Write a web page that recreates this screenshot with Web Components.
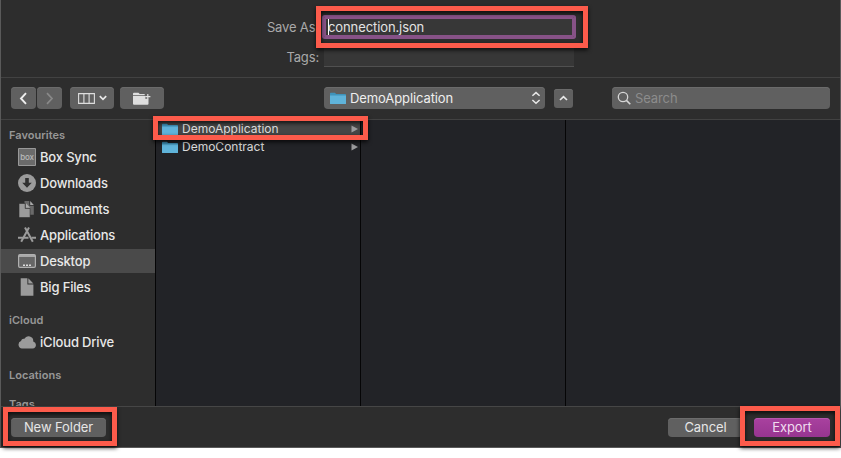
<!DOCTYPE html>
<html lang="en">
<head>
<meta charset="utf-8">
<title>Save dialog</title>
<style>
html,body{margin:0;background:#fff;overflow:hidden}
body{width:841px;height:458px;font-family:Inter,"Liberation Sans",sans-serif;font-size:13px;color:#e4e4e4}
</style>
</head>
<body>
<save-dialog></save-dialog>
<script>
const define = (name, html) => {
  const t = document.createElement('template');
  t.innerHTML = html;
  customElements.define(name, class extends HTMLElement {
    constructor() {
      super();
      this.attachShadow({mode: 'open'}).append(t.content.cloneNode(true));
    }
  });
};

/* Icons */
const ICONS = {
  back: [9, 13, '<path d="M7 1.2 2 6.5 7 11.8" fill="none" stroke="#eee" stroke-width="1.9"/>'],
  forward: [9, 13, '<path d="M2 1.2 7 6.5 2 11.8" fill="none" stroke="#898989" stroke-width="1.7"/>'],
  columns: [17, 11, '<path d="M.6.6h15.8v9.8H.6zM5.9.6v9.8M11.1.6v9.8" fill="none" stroke="#ddd" stroke-width="1.1"/>'],
  chevron: [8, 6, '<path d="M.8 1.2 4 4.4 7.200 1.200" fill="none" stroke="#e8e8e8" stroke-width="1.700"/>'],
  up: [9, 6, '<path d="M1 5 4.5 1.7 8 5" fill="none" stroke="#e8e8e8" stroke-width="1.7"/>'],
  updown: [10, 14, '<path d="M1.4 4.8 5 1.6 8.6 4.8M1.4 9 5 12.2 8.6 9" fill="none" stroke="#e8e8e8" stroke-width="1.5"/>'],
  newfolder: [18, 13, '<path d="M0 1.8Q0 .8 1 .8h4.500l1.200 1.200h5v1.300H0zM0 4h12.300v2.800h3.200v4.900q0 1-1 1H1q-1 0-1-1z" fill="#dedede"/><path d="M14.800 2v5.200M12.200 4.600h5.200" stroke="#dedede" stroke-width="1.200"/>'],
  search: [14, 14, '<circle cx="6" cy="6" r="4.700" fill="none" stroke="#d6d6d6" stroke-width="1.3"/><path d="m9.4 9.4 3.900 3.900" stroke="#d6d6d6" stroke-width="1.600"/>'],
  folder: [16, 13, '<path d="M0 1.500Q0 .8.8.8h4l1.400 1.200h9q.8 0 .8.8V4H0z" fill="#3f93bb"/><path d="M0 3.400h16v8q0 .6-.6.6H.6q-.6 0-.6-.6z" fill="#5fb3da"/>'],
  arrow: [7, 8, '<path d="M.5.5 7 4 .5 7.5z" fill="#9b9b9d"/>'],
  box: [18, 18, '<path d="M.5.5h17v17H.5z" fill="#6b6b6b" stroke="#999"/><text x="9" y="12" text-anchor="middle" font-size="8" fill="#b9b9b9" letter-spacing="-.2">box</text>'],
  downloads: [18, 18, '<circle cx="9" cy="9" r="9" fill="#9b9b9b"/><path d="M7.2 4h3.6v4.8h3L9 13.8 4.200 8.800h3z" fill="#303030"/>'],
  documents: [18, 18, '<path d="M6.500 1h4.800v4.800h4.500v9H6.500z" fill="#6a6a6a"/><path d="m12.200 1 3.600 4h-3.600z" fill="#aaa"/><path d="M1 3.500h6.200v5h4.900v9H1z" fill="#9b9b9b" stroke="#2e2e2e" stroke-width=".6"/><path d="m8 3.300 4.200 4.400H8z" fill="#aaa"/>'],
  applications: [18, 18, '<g fill="none" stroke="#9b9b9b" stroke-width="2"><path d="m7 1.500 7.800 14.200M11 1.500 3.200 15.700"/><path d="M0 11.700h10.500M13.500 11.700H18"/></g>'],
  desktop: [18, 14, '<rect x=".6" y=".6" width="16.800" height="12.800" rx="1.300" fill="#666" stroke="#b0b0b0" stroke-width="1.200"/><path d="M1 2h16" stroke="#b0b0b0" stroke-width="1.800"/><path d="M5 11.300h2m1 0h2m1 0h2" stroke="#ddd" stroke-width="1.400"/>'],
  file: [18, 18, '<path d="M2.700.3h6.700v6.200h6V17.700H2.700z" fill="#9b9b9b"/><path d="m10.300.3 5.100 5.300h-5.100z" fill="#9b9b9b"/>'],
  cloud: [18, 13, '<path d="M4 12.500a3.900 3.900 0 0 1-1-7.500 3 3 0 0 1 3.400-2.200A4.700 4.700 0 0 1 15.200 5.600a3.500 3.500 0 0 1-.5 6.900z" fill="#9b9b9b"/>']
};
customElements.define('ui-icon', class extends HTMLElement {
  connectedCallback() {
    if (this.shadowRoot) return;
    const [w, h, body] = ICONS[this.getAttribute('name')];
    this.attachShadow({mode: 'open'}).innerHTML =
      `<style>:host{display:block;flex:none;width:${w}px;height:${h}px}svg{display:block}</style><svg width="${w}" height="${h}" viewBox="0 0 ${w} ${h}">${body}</svg>`;
  }
});

/* Callout frame laid over the control it surrounds */
define('callout-frame', `<style>
:host{position:absolute;z-index:5;box-sizing:border-box;border:5px solid #fc5b4b;filter:drop-shadow(0 2px 2px #000c);pointer-events:none}
</style>`);

define('tool-button', `<style>
:host{display:flex;align-items:center;justify-content:center;box-sizing:border-box;width:44px;height:22px;border-radius:4px;background:#606060;box-shadow:inset 0 1px #6b6b6b;color:#eee}
</style><slot></slot>`);

define('push-button', `<style>
:host{display:flex;align-items:center;justify-content:center;height:19px;border-radius:4px;background:#606060;box-shadow:inset 0 1px #6c6c6c;color:#e6e6e6;white-space:nowrap;letter-spacing:-.08px}
:host([primary]){background:linear-gradient(#a9419f,#973590);box-shadow:inset 0 1px #b656ad;color:#f0dcef}
</style><slot></slot>`);

define('form-row', `<style>
:host{display:grid;grid-template-columns:318px 250px;column-gap:5px;height:20px;align-items:center}
.label{text-align:right;color:#a9a9a9;white-space:nowrap;letter-spacing:-.15px}
</style><span class="label"><slot name="label"></slot></span><slot></slot>`);

define('text-field', `<style>
:host{display:flex;align-items:center;box-sizing:border-box;height:20px;background:#373737;box-shadow:inset 0 -1px #505050;color:#e3e3e3}
:host([focused]){box-shadow:0 0 0 2px #875287,inset 0 0 0 2px #875287;border-radius:1px;padding-left:4px}
i{display:none;width:1px;height:16px;background:#fff;margin-right:-1px}
:host([focused]) i{display:block}
</style><i></i><slot></slot>`);

define('side-heading', `<style>
:host{display:flex;align-items:center;height:18px;padding-left:8px;font-size:11px;font-weight:600;color:#979797;white-space:nowrap;letter-spacing:.03px}
</style><slot></slot>`);

define('side-item', `<style>
:host{display:flex;align-items:center;height:24px;margin-bottom:2px;padding-left:17px;gap:4px;font-weight:500;color:#e8e8e8;white-space:nowrap;letter-spacing:-.17px}
:host([selected]){background:#4a4a4a}
</style><slot name="icon"></slot><slot></slot>`);

define('folder-row', `<style>
:host{display:flex;align-items:center;height:18px;padding:0 2px 0 6px;gap:4px;color:#dcdcdc;white-space:nowrap;font-size:12px}
:host([selected]){background:#464646}
.t{flex:1}
</style><ui-icon name="folder"></ui-icon><span class="t"><slot></slot></span><ui-icon name="arrow"></ui-icon>`);

define('file-column', `<style>
:host{display:block;box-sizing:border-box;background:#222327;border-left:1px solid #050506}
</style><slot></slot>`);

define('name-panel', `<style>
:host{display:flex;flex-direction:column;gap:10px;height:77px;box-sizing:border-box;padding-top:17px}
</style>
<form-row><span slot="label">Save As:</span><text-field focused><span style="letter-spacing:-.1px">connection.json</span></text-field></form-row>
<form-row><span slot="label">Tags:</span><text-field></text-field></form-row>`);

define('tool-bar', `<style>
:host{display:flex;align-items:center;height:43px;box-sizing:border-box;padding:0 10px 1px;border-top:1px solid #424242;border-bottom:1px solid #424242}
.nav{display:flex;gap:1px;margin-right:8px}
.nav tool-button{width:25px}
.view{gap:4px;margin-right:6px}
.path{width:221px;margin-left:160px;padding:0 4px 0 6px;justify-content:flex-start;gap:4px}
.path span{flex:1;letter-spacing:-.1px}
.up{width:19px;height:19px;margin-left:9px;border-radius:3px}
.search{width:218px;margin-left:39px;padding-left:5px;gap:4px;justify-content:flex-start;color:#8c8c8c;letter-spacing:-.1px}
</style>
<div class="nav"><tool-button><ui-icon name="back"></ui-icon></tool-button><tool-button><ui-icon name="forward"></ui-icon></tool-button></div>
<tool-button class="view"><ui-icon name="columns"></ui-icon><ui-icon name="chevron"></ui-icon></tool-button>
<tool-button><ui-icon name="newfolder"></ui-icon></tool-button>
<tool-button class="path"><ui-icon name="folder"></ui-icon><span>DemoApplication</span><ui-icon name="updown"></ui-icon></tool-button>
<tool-button class="up"><ui-icon name="up"></ui-icon></tool-button>
<tool-button class="search"><ui-icon name="search"></ui-icon><span>Search</span></tool-button>`);

define('side-bar', `<style>
:host{display:block;box-sizing:border-box;overflow:hidden;padding-top:6px}
.g{margin-top:11px}.h{margin-bottom:1px}.c{margin-top:12px}
</style>
<side-heading class="h">Favourites</side-heading>
<side-item><ui-icon slot="icon" name="box"></ui-icon>Box Sync</side-item>
<side-item><ui-icon slot="icon" name="downloads"></ui-icon>Downloads</side-item>
<side-item><ui-icon slot="icon" name="documents"></ui-icon>Documents</side-item>
<side-item><ui-icon slot="icon" name="applications"></ui-icon>Applications</side-item>
<side-item selected><ui-icon slot="icon" name="desktop"></ui-icon>Desktop</side-item>
<side-item><ui-icon slot="icon" name="file"></ui-icon>Big Files</side-item>
<side-heading class="c h">iCloud</side-heading>
<side-item><ui-icon slot="icon" name="cloud"></ui-icon>iCloud Drive</side-item>
<side-heading class="c">Locations</side-heading>
<side-heading class="g">Tags</side-heading>`);

define('file-browser', `<style>
:host{display:grid;grid-template-columns:154px 205px 205px 1fr;grid-template-rows:286px;height:286px;overflow:hidden}
</style>
<side-bar></side-bar>
<file-column><folder-row selected>DemoApplication</folder-row><folder-row>DemoContract</folder-row></file-column>
<file-column></file-column>
<file-column></file-column>`);

define('dialog-footer', `<style>
:host{display:flex;align-items:center;flex:1;box-sizing:border-box;padding:0 10px 0;border-top:1px solid #464646}
.new{width:95px}.cancel{width:75px;margin-left:auto;margin-right:11px}.ok{width:76px}
</style>
<push-button class="new">New Folder</push-button>
<push-button class="cancel">Cancel</push-button>
<push-button class="ok" primary>Export</push-button>`);

define('save-dialog', `<style>
:host{display:flex;flex-direction:column;position:relative;box-sizing:border-box;width:841px;height:448px;background:#2d2d2d;border:solid #5a5a5a;border-width:0 1px 1px;line-height:16px}
.name{left:315px;top:6px;width:272px;height:42px}
.row{left:152px;top:116px;width:215px;height:24px}
.new{left:2px;top:407px;width:114px;height:39px}
.ok{left:739px;top:406px;width:100px;height:40px}
</style>
<name-panel></name-panel>
<tool-bar></tool-bar>
<file-browser></file-browser>
<dialog-footer></dialog-footer>
<callout-frame class="name"></callout-frame>
<callout-frame class="row"></callout-frame>
<callout-frame class="new"></callout-frame>
<callout-frame class="ok"></callout-frame>`);
</script>
</body>
</html>
